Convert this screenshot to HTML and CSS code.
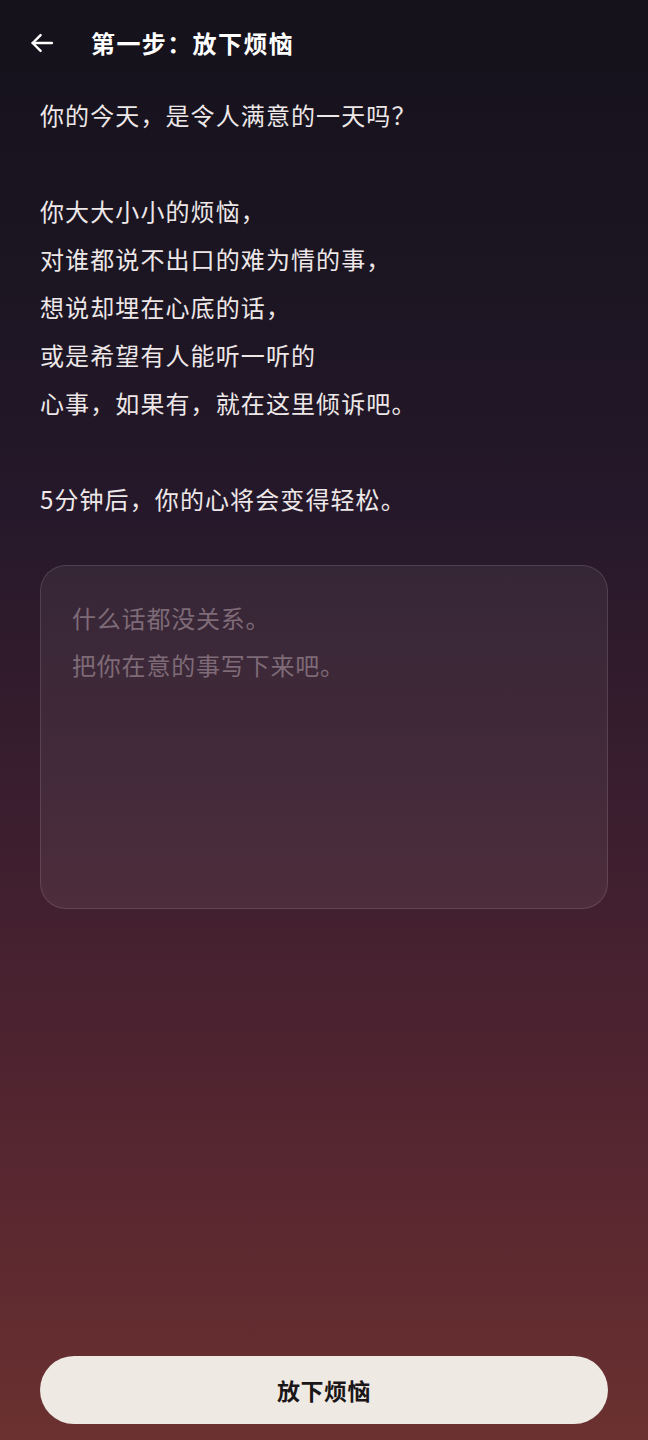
FILE: index.html
```html
<!DOCTYPE html>
<html lang="zh-CN">
<head>
<meta charset="utf-8">
<meta name="viewport" content="width=648">
<title>第一步：放下烦恼</title>
<link rel="stylesheet" href="styles.css">
</head>
<body>
<div class="page">
  <header class="topbar">
    <button class="back" aria-label="返回">
      <svg width="28" height="28" viewBox="0 0 24 24" fill="none" stroke="#ffffff" stroke-width="2.1" stroke-linecap="round" stroke-linejoin="round">
        <path d="M20.5 12H4"/>
        <path d="M10.8 5.2L4 12L10.8 18.8"/>
      </svg>
    </button>
    <h1 class="title">第一步：放下烦恼</h1>
  </header>

  <main class="content">
    <div class="intro">
      <p>你的今天，是令人满意的一天吗？</p>
      <p>你大大小小的烦恼，<br>对谁都说不出口的难为情的事，<br>想说却埋在心底的话，<br>或是希望有人能听一听的<br>心事，如果有，就在这里倾诉吧。</p>
      <p>5分钟后，你的心将会变得轻松。</p>
    </div>

    <div class="editor">
      <div class="placeholder">什么话都没关系。<br>把你在意的事写下来吧。</div>
    </div>
  </main>

  <div class="footer">
    <button class="primary">放下烦恼</button>
  </div>
</div>
</body>
</html>
```

FILE: styles.css
```css
* {
  box-sizing: border-box;
}

html, body {
  margin: 0;
  padding: 0;
}

body {
  font-family: "Noto Sans CJK SC", "Noto Sans", sans-serif;
  color: #ede7e8;
  background: #16131d;
}

.page {
  min-height: 1440px;
  display: flex;
  flex-direction: column;
  background: linear-gradient(180deg,
    #15121c 0%,
    #1c1522 20%,
    #25182a 35%,
    #2f1b2c 45%,
    #3f1f2f 60%,
    #4d2330 72%,
    #5a2830 84%,
    #6b3130 100%);
}

.topbar {
  height: 91px;
  display: flex;
  align-items: flex-start;
  padding-top: 27px;
}

.back {
  width: 32px;
  height: 32px;
  margin-left: 26px;
  padding: 0;
  border: 0;
  background: transparent;
  display: flex;
  align-items: center;
  justify-content: center;
}

.title {
  margin: 0 0 0 33px;
  font-size: 24px;
  line-height: 32px;
  font-weight: 700;
  color: #ffffff;
  letter-spacing: 1.4px;
}

.content {
  padding: 0 40px;
  flex: 1;
}

.intro {
  font-size: 24px;
  line-height: 48px;
  letter-spacing: 1.1px;
}

.intro p {
  margin: 0 0 48px 0;
}

.intro p:last-child {
  margin-bottom: 0;
}

.editor {
  margin-top: 42px;
  height: 344px;
  border-radius: 26px;
  border: 1px solid rgba(255, 255, 255, 0.12);
  background: rgba(255, 255, 255, 0.06);
  padding: 28px 31px;
}

.placeholder {
  font-size: 24px;
  line-height: 47px;
  color: #7e6b77;
  letter-spacing: 0.8px;
}

.footer {
  padding: 0 40px 16px;
}

.primary {
  width: 100%;
  height: 68px;
  border: 0;
  border-radius: 34px;
  background: #eee9e3;
  color: #1a1618;
  font-family: "Noto Sans CJK SC", "Noto Sans", sans-serif;
  font-size: 23px;
  font-weight: 700;
  letter-spacing: 0.5px;
}
```
